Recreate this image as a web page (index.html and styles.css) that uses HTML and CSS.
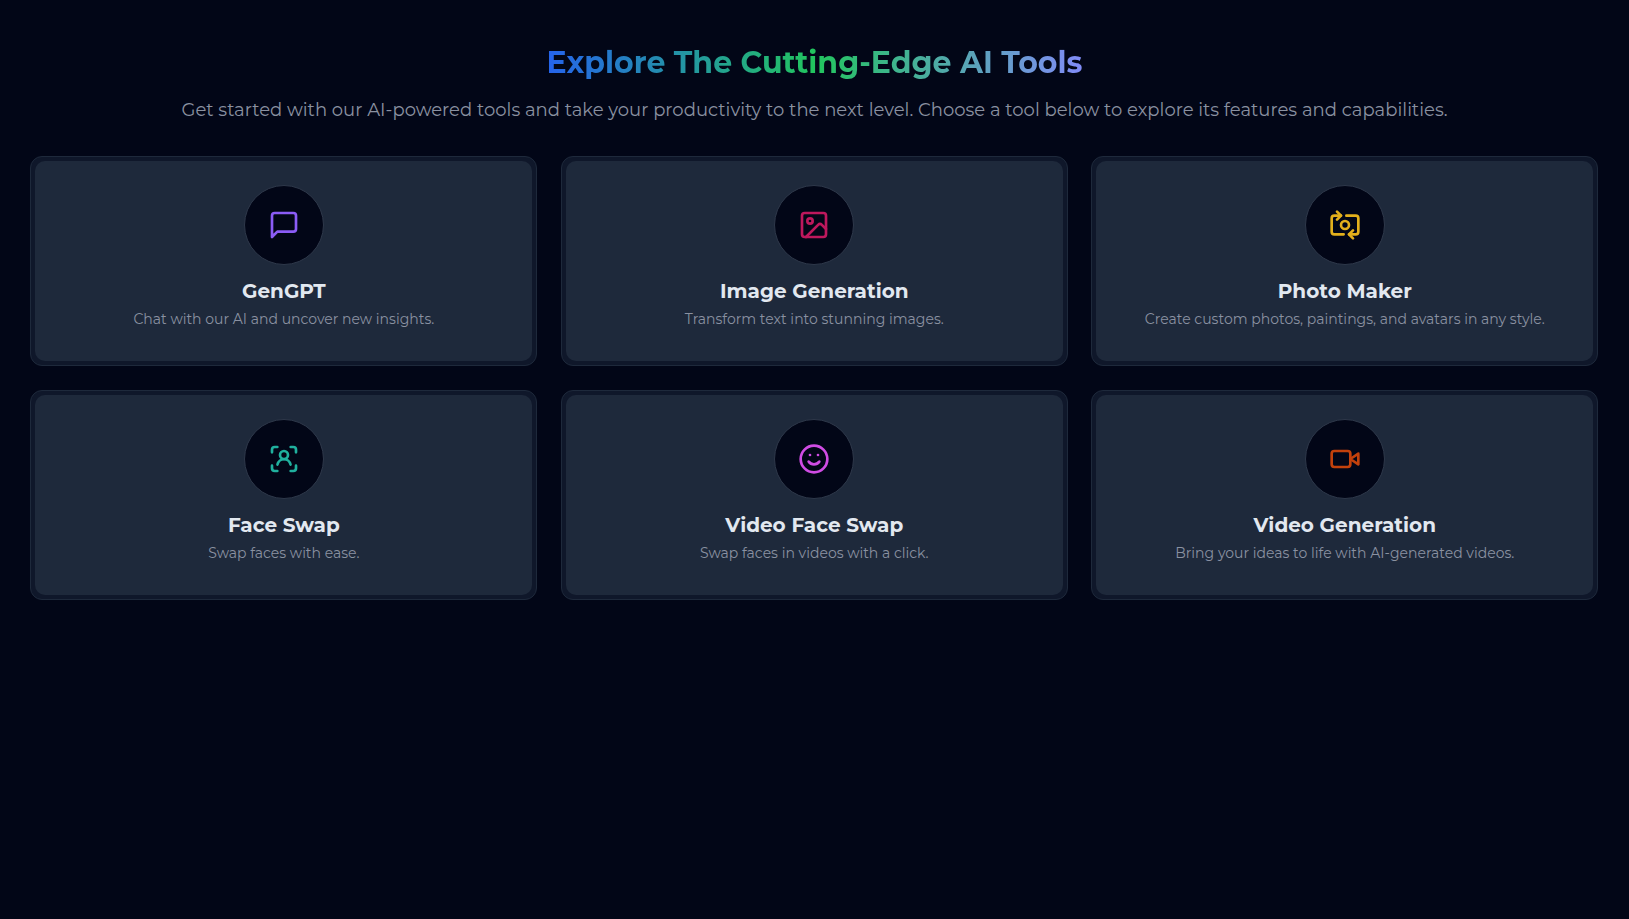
FILE: index.html
```html
<!DOCTYPE html>
<html lang="en">
<head>
<meta charset="utf-8">
<title>AI Tools</title>
<link rel="stylesheet" href="styles.css">
</head>
<body>
<main class="page">
  <header class="intro">
    <h1 class="intro-title">Explore The Cutting-Edge AI Tools</h1>
    <p class="intro-text">Get started with our AI-powered tools and take your productivity to the next level. Choose a tool below to explore its features and capabilities.</p>
  </header>
  <section class="tools">
    <a class="tool">
      <div class="tool-body">
        <span class="tool-icon violet"><svg viewBox="0 0 24 24"><path d="M21 15a2 2 0 0 1-2 2H7l-4 4V5a2 2 0 0 1 2-2h14a2 2 0 0 1 2 2z"/></svg></span>
        <h2 class="tool-title">GenGPT</h2>
        <p class="tool-text">Chat with our AI and uncover new insights.</p>
      </div>
    </a>
    <a class="tool">
      <div class="tool-body">
        <span class="tool-icon pink"><svg viewBox="0 0 24 24"><rect x="3" y="3" width="18" height="18" rx="2"/><circle cx="9" cy="9" r="2"/><path d="m21 15-3.086-3.086a2 2 0 0 0-2.828 0L6 21"/></svg></span>
        <h2 class="tool-title">Image Generation</h2>
        <p class="tool-text">Transform text into stunning images.</p>
      </div>
    </a>
    <a class="tool">
      <div class="tool-body">
        <span class="tool-icon yellow"><svg viewBox="0 0 24 24"><path d="M11 19H4a2 2 0 0 1-2-2V7a2 2 0 0 1 2-2h5"/><path d="M13 5h7a2 2 0 0 1 2 2v10a2 2 0 0 1-2 2h-5"/><circle cx="12" cy="12" r="3"/><path d="m18 22-3-3 3-3"/><path d="m6 2 3 3-3 3"/></svg></span>
        <h2 class="tool-title">Photo Maker</h2>
        <p class="tool-text">Create custom photos, paintings, and avatars in any style.</p>
      </div>
    </a>
    <a class="tool">
      <div class="tool-body">
        <span class="tool-icon teal"><svg viewBox="0 0 24 24"><path d="M3 7V5a2 2 0 0 1 2-2h2"/><path d="M17 3h2a2 2 0 0 1 2 2v2"/><path d="M21 17v2a2 2 0 0 1-2 2h-2"/><path d="M7 21H5a2 2 0 0 1-2-2v-2"/><circle cx="12" cy="9" r="3"/><path d="M7.1 16.2a5 5 0 0 1 9.8 0"/></svg></span>
        <h2 class="tool-title">Face Swap</h2>
        <p class="tool-text">Swap faces with ease.</p>
      </div>
    </a>
    <a class="tool">
      <div class="tool-body">
        <span class="tool-icon fuchsia"><svg viewBox="0 0 24 24"><circle cx="12" cy="12" r="10"/><path d="M8 14s1.5 2 4 2 4-2 4-2"/><path d="M9 9h.01"/><path d="M15 9h.01"/></svg></span>
        <h2 class="tool-title">Video Face Swap</h2>
        <p class="tool-text">Swap faces in videos with a click.</p>
      </div>
    </a>
    <a class="tool">
      <div class="tool-body">
        <span class="tool-icon orange"><svg viewBox="0 0 24 24"><path d="m22 8-6 4 6 4V8Z"/><rect x="2" y="6" width="14" height="12" rx="2"/></svg></span>
        <h2 class="tool-title">Video Generation</h2>
        <p class="tool-text">Bring your ideas to life with AI-generated videos.</p>
      </div>
    </a>
  </section>
</main>
</body>
</html>
```
FILE: styles.css
```css
* { box-sizing: border-box; margin: 0; }

body {
  background: #020617;
  color: #e2e8f0;
  font-family: Montserrat, Inter, sans-serif;
}

.page { padding: 45px 0; }

.intro {
  display: flex;
  flex-direction: column;
  align-items: center;
  gap: 15px;
  margin-bottom: 32px;
}

.intro-title {
  font-size: 30px;
  line-height: 36px;
  font-weight: 700;
  color: transparent;
  background: linear-gradient(to right, #2563eb, #22c55e, #818cf8);
  -webkit-background-clip: text;
  background-clip: text;
}

.intro-text {
  font-size: 18px;
  line-height: 28px;
  letter-spacing: 0.013px;
  color: #8a91a1;
}

.tools {
  display: grid;
  grid-template-columns: repeat(3, 1fr);
  gap: 24px 23.4px;
  padding: 0 30.7px 0 30.3px;
}

.tool {
  padding: 4px;
  border: 1px solid #1e293b;
  border-radius: 12px;
  background: #0f172a;
}

.tool-body {
  display: flex;
  flex-direction: column;
  align-items: center;
  padding: 24px 16px 32px;
  border-radius: 10px;
  background: #1e293b;
}

.tool-icon {
  display: flex;
  align-items: center;
  justify-content: center;
  width: 80px;
  height: 80px;
  border: 1px solid #2e384a;
  border-radius: 50%;
  background: #020617;
}

.tool-icon svg {
  width: 32px;
  height: 32px;
  fill: none;
  stroke: currentColor;
  stroke-width: 2;
  stroke-linecap: round;
  stroke-linejoin: round;
}

.violet { color: #8b5cf6; }
.pink { color: #be185d; }
.yellow { color: #e3b01c; }
.teal { color: #20b09e; }
.fuchsia { color: #d04ce4; }
.orange { color: #c2410c; }

.tool-title {
  margin-top: 12px;
  font-size: 20px;
  line-height: 28px;
  font-weight: 700;
}

.tool-text {
  margin-top: 4px;
  font-size: 14px;
  line-height: 20px;
  letter-spacing: 0.01px;
  color: #8a91a1;
}
```
